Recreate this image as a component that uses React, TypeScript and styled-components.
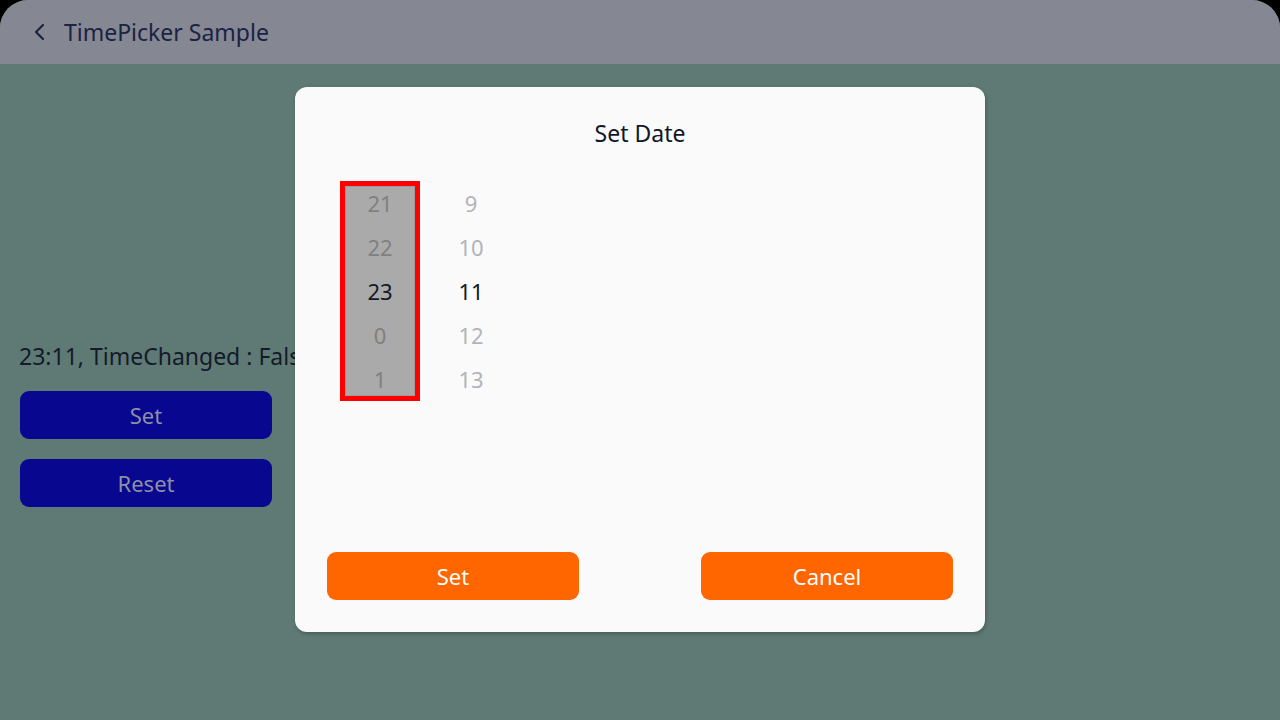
import styled, { createGlobalStyle } from "styled-components";

const GlobalStyle = createGlobalStyle`
  html, body {
    margin: 0;
    padding: 0;
    background: #000;
    font-family: "Noto Sans", "Open Sans", sans-serif;
  }
`;

const Screen = styled.div`
  position: relative;
  width: 1280px;
  height: 720px;
  display: flex;
  flex-direction: column;
  background: #5f7a75;
  border-radius: 28px 28px 0 0;
  overflow: hidden;
`;

const Header = styled.header`
  height: 64px;
  flex: none;
  display: flex;
  align-items: center;
  padding-left: 30px;
  gap: 14px;
  background: #858892;
  color: #1b2242;
  font-size: 23px;
`;

const BackIcon = styled.svg`
  width: 20px;
  height: 20px;
`;

const Content = styled.main`
  flex: 1;
  display: flex;
  flex-direction: column;
  padding: 276px 0 0 19px;
`;

const Status = styled.div`
  font-size: 23px;
  color: #131a2a;
  line-height: 32px;
  white-space: nowrap;
  margin-bottom: 19px;
`;

const BlueButton = styled.button`
  width: 252px;
  height: 48px;
  margin-left: 1px;
  border: none;
  border-radius: 9px;
  background: #070790;
  color: #8e8ea4;
  font-family: inherit;
  font-size: 22px;
  margin-bottom: 20px;
  padding: 0;
`;

const Dialog = styled.div`
  position: absolute;
  left: 295px;
  top: 87px;
  width: 690px;
  height: 545px;
  background: #fafafa;
  border-radius: 12px;
  box-shadow: 1px 2px 4px rgba(0, 0, 0, 0.25);
  display: flex;
  flex-direction: column;
  box-sizing: border-box;
  padding: 30px 32px 32px;
`;

const Title = styled.div`
  text-align: center;
  font-size: 23px;
  color: #111628;
  line-height: 32px;
`;

const Picker = styled.div`
  display: flex;
  margin: 32px 0 0 13px;
  flex: 1;
`;

const Column = styled.div<{ $highlight?: boolean }>`
  width: 80px;
  height: 220px;
  display: flex;
  flex-direction: column;
  background: ${(p) => (p.$highlight ? "#aaaaaa" : "transparent")};
  box-shadow: ${(p) => (p.$highlight ? "inset 0 0 0 6px #9c9c9c" : "none")};
  outline: ${(p) => (p.$highlight ? "5px solid #ff0000" : "none")};
  outline-offset: -5px;
  margin-right: 11px;
`;

const Cell = styled.div<{ $selected?: boolean; $dim: string }>`
  height: 44px;
  display: flex;
  align-items: center;
  justify-content: center;
  font-size: 22px;
  color: ${(p) => (p.$selected ? "#141827" : p.$dim)};
`;

const Actions = styled.div`
  display: flex;
  justify-content: space-between;
`;

const OrangeButton = styled.button`
  width: 252px;
  height: 48px;
  border: none;
  border-radius: 9px;
  background: #ff6600;
  color: #ffffff;
  font-family: inherit;
  font-size: 22px;
  padding: 0;
`;

const hours = ["21", "22", "23", "0", "1"];
const minutes = ["9", "10", "11", "12", "13"];

const App = () => {
  return (
    <>
      <GlobalStyle />
      <Screen>
        <Header>
          <BackIcon viewBox="0 0 20 20">
            <path
              d="M13 3 L6 10 L13 17"
              fill="none"
              stroke="#1b2242"
              strokeWidth="2.2"
              strokeLinecap="round"
              strokeLinejoin="round"
            />
          </BackIcon>
          TimePicker Sample
        </Header>
        <Content>
          <Status>23:11, TimeChanged : False</Status>
          <BlueButton>Set</BlueButton>
          <BlueButton>Reset</BlueButton>
        </Content>
        <Dialog>
          <Title>Set Date</Title>
          <Picker>
            <Column $highlight>
              {hours.map((h) => (
                <Cell key={h} $selected={h === "23"} $dim="#808080">
                  {h}
                </Cell>
              ))}
            </Column>
            <Column>
              {minutes.map((m) => (
                <Cell key={m} $selected={m === "11"} $dim="#b3b3ba">
                  {m}
                </Cell>
              ))}
            </Column>
          </Picker>
          <Actions>
            <OrangeButton>Set</OrangeButton>
            <OrangeButton>Cancel</OrangeButton>
          </Actions>
        </Dialog>
      </Screen>
    </>
  );
};

export default App;
